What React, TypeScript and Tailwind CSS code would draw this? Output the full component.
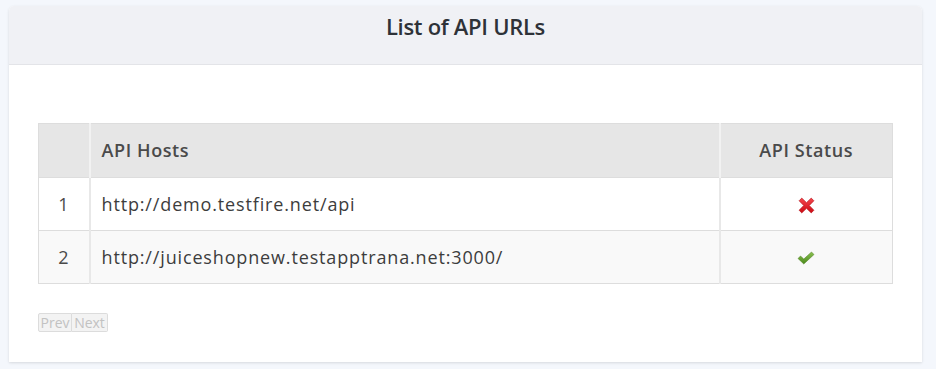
import React from "react";

const hosts = [
  { id: 1, url: "http://demo.testfire.net/api", ok: false },
  { id: 2, url: "http://juiceshopnew.testapptrana.net:3000/", ok: true },
];

function CrossIcon() {
  return (
    <svg width="19" height="17" viewBox="0 0 18 16">
      <defs>
        <linearGradient id="xg" x1="0" y1="0" x2="0" y2="1">
          <stop offset="0" stopColor="#f5474e" />
          <stop offset="1" stopColor="#cc0a12" />
        </linearGradient>
      </defs>
      <path
        d="M2 3.5 L4.5 1 L9 5.3 L13.5 1 L16 3.5 L11.6 8 L16 12.5 L13.5 15 L9 10.7 L4.5 15 L2 12.5 L6.4 8 Z"
        fill="url(#xg)"
        stroke="#b10d14"
        strokeWidth="0.6"
        strokeLinejoin="round"
      />
    </svg>
  );
}

function CheckIcon() {
  return (
    <svg width="18" height="14" viewBox="0 0 18 14">
      <defs>
        <linearGradient id="cg" x1="0" y1="0" x2="0" y2="1">
          <stop offset="0" stopColor="#8cc152" />
          <stop offset="1" stopColor="#4b8a1c" />
        </linearGradient>
      </defs>
      <path
        d="M1 7.5 L3.5 5 L6.8 8 L14.5 1 L17 3.5 L6.8 13 Z"
        fill="url(#cg)"
        stroke="#4a7d1f"
        strokeWidth="0.5"
        strokeLinejoin="round"
      />
    </svg>
  );
}

export default function App() {
  return (
    <div
      className="min-h-[369px] w-full bg-[#f4f7fc] pl-[9px] pr-[14px] pt-[6px] pb-[7px]"
      style={{ fontFamily: "'Open Sans', 'Liberation Sans', sans-serif" }}
    >
      <div className="h-[356px] rounded-t-[5px] bg-white shadow-[0_1px_3px_rgba(0,0,0,0.12)]">
        <div className="flex h-[59px] items-start justify-center rounded-t-[5px] border-b border-[#e3e4e8] bg-[#f0f1f5] pt-[1px]">
          <h2 className="text-[22px] leading-[38px] font-semibold tracking-[-0.3px] text-[#2e3238]">
            List of API URLs
          </h2>
        </div>

        <div className="px-[29px] pt-[58px]">
          <table className="w-full border-collapse border border-[#dddddd] text-[18px] tracking-[0.85px] text-[#3d3d3d]">
            <thead>
              <tr className="h-[54px] bg-[#e6e6e6]">
                <th className="w-[51px] border-r-2 border-[#f2f2f2]" />
                <th className="border-r-2 border-[#f2f2f2] pl-[11px] text-left font-semibold tracking-[0.6px] text-[#4a4a4a]">
                  API Hosts
                </th>
                <th className="w-[173px] text-center font-semibold tracking-[0.6px] text-[#4a4a4a]">
                  API Status
                </th>
              </tr>
            </thead>
            <tbody>
              {hosts.map((h, i) => (
                <tr
                  key={h.id}
                  className={`h-[53px] border-t border-[#dddddd] ${
                    i % 2 === 1 ? "bg-[#f9f9f9]" : "bg-white"
                  }`}
                >
                  <td className="border-r-2 border-[#e8e8e8] text-center text-[#4a4a4a]">
                    {h.id}
                  </td>
                  <td className="border-r-2 border-[#e8e8e8] pl-[11px]">{h.url}</td>
                  <td>
                    <div className="flex justify-center pt-[2px]">
                      {h.ok ? <CheckIcon /> : <CrossIcon />}
                    </div>
                  </td>
                </tr>
              ))}
            </tbody>
          </table>

          <div className="mt-[29px] flex">
            <button className="h-[19px] w-[34px] rounded-l-[2px] border border-[#dcdcdc] bg-[#f3f3f3] text-[14px] leading-[16px] text-[#c2c2c2]">
              Prev
            </button>
            <button className="h-[19px] w-[36px] rounded-r-[2px] border border-l-0 border-[#dcdcdc] bg-[#f3f3f3] text-[14px] leading-[16px] text-[#c2c2c2]">
              Next
            </button>
          </div>
        </div>
      </div>
    </div>
  );
}
